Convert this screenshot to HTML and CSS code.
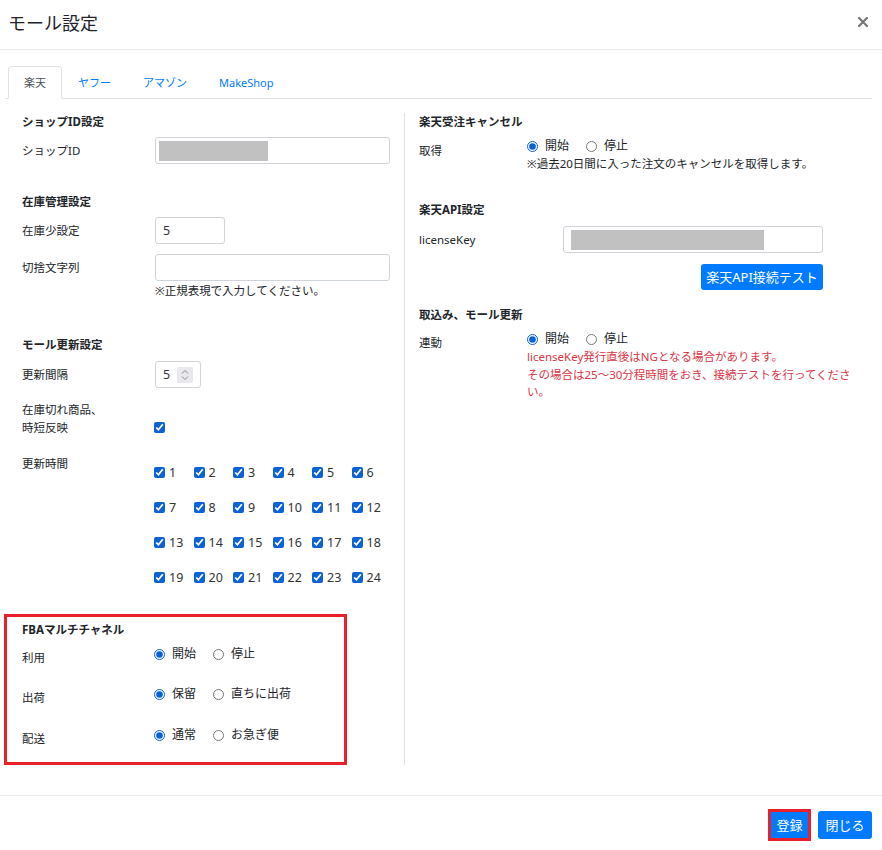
FILE: index.html
```html
<!DOCTYPE html>
<html lang="ja">
<head>
  <meta charset="UTF-8" />
  <title>モール設定</title>
  <link rel="stylesheet" href="styles.css">
</head>
<body>

<div class="modal-header">
  <h1 class="modal-title">モール設定</h1>
  <span class="close">
    <svg width="10" height="10" viewBox="0 0 10 10"><path d="M1 1 L9 9 M9 1 L1 9" stroke="#777" stroke-width="2.2" stroke-linecap="square"/></svg>
  </span>
</div>

<div class="tabs">
  <div class="tab active">楽天</div>
  <div class="tab">ヤフー</div>
  <div class="tab">アマゾン</div>
  <div class="tab">MakeShop</div>
</div>

<div class="pane-row">
  <!-- left column -->
  <div class="col-left">
    <h3 class="heading">ショップID設定</h3>
    <div class="form-row mt6">
      <div class="label">ショップID</div>
      <div class="field field-wide"><span class="mask mask-shop"></span></div>
    </div>

    <h3 class="heading mt29">在庫管理設定</h3>
    <div class="form-row mt6">
      <div class="label">在庫少設定</div>
      <div class="field field-short"><span class="value">5</span></div>
    </div>
    <div class="form-row mt10">
      <div class="label">切捨文字列</div>
      <div class="field field-wide"></div>
    </div>
    <div class="note-left">※正規表現で入力してください。</div>

    <h3 class="heading mt36">モール更新設定</h3>
    <div class="form-row mt7">
      <div class="label">更新間隔</div>
      <div class="field field-num">
        <span class="value">5</span>
        <span class="spinner">
          <svg width="16" height="16" viewBox="0 0 16 16"><path d="M5 6.5 L8 3.5 L11 6.5 M5 9.5 L8 12.5 L11 9.5" fill="none" stroke="#8a8a8a" stroke-width="1"/></svg>
        </span>
      </div>
    </div>
    <div class="form-row top mt13">
      <div class="label">在庫切れ商品、<br>時短反映</div>
      <input type="checkbox" class="check check-stock" checked>
    </div>
    <div class="form-row top mt18">
      <div class="label">更新時間</div>
      <div class="hours">
        <label class="hour"><input type="checkbox" class="check" checked>1</label>
        <label class="hour"><input type="checkbox" class="check" checked>2</label>
        <label class="hour"><input type="checkbox" class="check" checked>3</label>
        <label class="hour"><input type="checkbox" class="check" checked>4</label>
        <label class="hour"><input type="checkbox" class="check" checked>5</label>
        <label class="hour"><input type="checkbox" class="check" checked>6</label>
        <label class="hour"><input type="checkbox" class="check" checked>7</label>
        <label class="hour"><input type="checkbox" class="check" checked>8</label>
        <label class="hour"><input type="checkbox" class="check" checked>9</label>
        <label class="hour"><input type="checkbox" class="check" checked>10</label>
        <label class="hour"><input type="checkbox" class="check" checked>11</label>
        <label class="hour"><input type="checkbox" class="check" checked>12</label>
        <label class="hour"><input type="checkbox" class="check" checked>13</label>
        <label class="hour"><input type="checkbox" class="check" checked>14</label>
        <label class="hour"><input type="checkbox" class="check" checked>15</label>
        <label class="hour"><input type="checkbox" class="check" checked>16</label>
        <label class="hour"><input type="checkbox" class="check" checked>17</label>
        <label class="hour"><input type="checkbox" class="check" checked>18</label>
        <label class="hour"><input type="checkbox" class="check" checked>19</label>
        <label class="hour"><input type="checkbox" class="check" checked>20</label>
        <label class="hour"><input type="checkbox" class="check" checked>21</label>
        <label class="hour"><input type="checkbox" class="check" checked>22</label>
        <label class="hour"><input type="checkbox" class="check" checked>23</label>
        <label class="hour"><input type="checkbox" class="check" checked>24</label>
      </div>
    </div>

    <div class="fba">
      <h3 class="heading">FBAマルチチャネル</h3>
      <div class="fba-row mt6">
        <div class="label fba-label">利用</div>
        <div class="radios">
          <label class="radio-opt"><input type="radio" name="fba-use" class="radio" checked>開始</label>
          <label class="radio-opt"><input type="radio" name="fba-use" class="radio">停止</label>
        </div>
      </div>
      <div class="fba-row mt18">
        <div class="label fba-label">出荷</div>
        <div class="radios">
          <label class="radio-opt"><input type="radio" name="fba-ship" class="radio" checked>保留</label>
          <label class="radio-opt"><input type="radio" name="fba-ship" class="radio">直ちに出荷</label>
        </div>
      </div>
      <div class="fba-row mt19">
        <div class="label fba-label">配送</div>
        <div class="radios">
          <label class="radio-opt"><input type="radio" name="fba-speed" class="radio" checked>通常</label>
          <label class="radio-opt"><input type="radio" name="fba-speed" class="radio">お急ぎ便</label>
        </div>
      </div>
    </div>
  </div>

  <!-- right column -->
  <div class="col-right">
    <h3 class="heading">楽天受注キャンセル</h3>
    <div class="form-row top mt6">
      <div class="label label-r lbl-offset5">取得</div>
      <div>
        <div class="radios">
          <label class="radio-opt"><input type="radio" name="cancel" class="radio" checked>開始</label>
          <label class="radio-opt"><input type="radio" name="cancel" class="radio">停止</label>
        </div>
        <div class="note">※過去20日間に入った注文のキャンセルを取得します。</div>
      </div>
    </div>

    <h3 class="heading mt28">楽天API設定</h3>
    <div class="form-row mt7">
      <div class="label label-key">licenseKey</div>
      <div class="field field-key"><span class="mask mask-key"></span></div>
    </div>
    <div class="api-btn-row">
      <button class="btn btn-api">楽天API接続テスト</button>
    </div>

    <h3 class="heading mt16">取込み、モール更新</h3>
    <div class="form-row top mt6">
      <div class="label label-r lbl-offset4">連動</div>
      <div>
        <div class="radios">
          <label class="radio-opt"><input type="radio" name="link" class="radio" checked>開始</label>
          <label class="radio-opt"><input type="radio" name="link" class="radio">停止</label>
        </div>
        <div class="note-red">licenseKey発行直後はNGとなる場合があります。<br>その場合は25～30分程時間をおき、接続テストを行ってくださ<br>い。</div>
      </div>
    </div>
  </div>
</div>

<div class="modal-footer">
  <button class="btn btn-register">登録</button>
  <button class="btn btn-close">閉じる</button>
</div>

</body>
</html>
```

FILE: styles.css
```css
body {
  margin: 0;
  font-family: 'Noto Sans', 'Noto Sans CJK JP', sans-serif;
  font-size: 11.5px;
  line-height: 18px;
  color: #212529;
  background: #fff;
}
.modal-header {
  display: flex;
  justify-content: space-between;
  align-items: center;
  height: 50px;
  box-sizing: border-box;
  padding: 0 14px 4px 8px;
  border-bottom: 1px solid #e9ecef;
}
.modal-title {
  margin: 0;
  font-size: 18px;
  font-weight: normal;
  line-height: 24px;
}
.close {
  display: flex;
  margin-top: -1px;
}
.tabs {
  display: flex;
  margin: 16px 10px 0 5px;
  padding-left: 3px;
  border-bottom: 1px solid #dee2e6;
}
.tab {
  padding: 8px 15px;
  font-size: 11px;
  line-height: 15px;
  color: #007bff;
  border: 1px solid transparent;
  border-radius: 4px 4px 0 0;
  margin-bottom: -1px;
}
.tab.active {
  color: #495057;
  background: #fff;
  border-color: #dee2e6 #dee2e6 #fff;
}
.pane-row {
  display: flex;
  margin: 14px 0 0 4px;
}
.col-left {
  width: 400px;
  box-sizing: border-box;
  padding: 0 14px 0 18px;
}
.col-right {
  border-left: 1px solid #dee2e6;
  padding-left: 14px;
  width: 440px;
}
.heading {
  margin: 0;
  font-size: 11.5px;
  font-weight: bold;
  line-height: 18px;
}
.form-row {
  display: flex;
  align-items: center;
}
.form-row.top {
  align-items: flex-start;
}
.label {
  width: 133px;
  flex-shrink: 0;
}
.label-r {
  width: 108px;
}
.label-key {
  width: 144px;
}
.lbl-offset5 {
  margin-top: 5px;
}
.lbl-offset4 {
  margin-top: 4px;
}
.mt6 { margin-top: 6px; }
.mt7 { margin-top: 7px; }
.mt10 { margin-top: 10px; }
.mt13 { margin-top: 13px; }
.mt16 { margin-top: 16px; }
.mt18 { margin-top: 18px; }
.mt19 { margin-top: 19px; }
.mt28 { margin-top: 28px; }
.mt29 { margin-top: 29px; }
.mt36 { margin-top: 36px; }

.field {
  display: flex;
  align-items: center;
  box-sizing: border-box;
  height: 27px;
  border: 1px solid #ced4da;
  border-radius: 3px;
  padding: 0 3px;
  background: #fff;
}
.field-wide {
  width: 235px;
}
.field-short {
  width: 70px;
  padding-left: 7px;
}
.field-num {
  width: 46px;
  padding-left: 7px;
}
.field-key {
  width: 260px;
  height: 27px;
  padding-left: 7px;
}
.value {
  font-size: 12.5px;
  color: #333;
}
.spinner {
  display: flex;
  margin-left: 7px;
  background: #e9e9ed;
  border-radius: 2px;
}
.mask {
  display: block;
  height: 20px;
  background: #c1c1c1;
}
.mask-shop {
  width: 109px;
}
.mask-key {
  width: 193px;
}
.note-left {
  margin: 1px 0 0 133px;
}
.check {
  width: 11px;
  height: 11px;
  margin: 0;
  accent-color: #0b62d6;
}
.check-stock {
  margin-top: 21px;
  margin-left: -1px;
}
.hours {
  display: grid;
  grid-template-columns: repeat(6, 39.5px);
  grid-auto-rows: 35px;
  align-items: center;
  margin-left: -1px;
}
.hour {
  display: flex;
  align-items: center;
  gap: 4px;
  font-size: 12.5px;
  color: #333;
}
.fba {
  margin: 19px 0 0 -18px;
  width: 343px;
  box-sizing: border-box;
  border: 3px solid #e8202a;
  padding: 4px 0 14px 15px;
}
.fba-row {
  display: flex;
  align-items: flex-start;
}
.fba-label {
  width: 132px;
  margin-top: 4px;
}
.radios {
  display: flex;
  align-items: center;
  font-size: 12px;
  line-height: 18px;
}
.radio-opt {
  display: flex;
  align-items: center;
  gap: 7px;
  margin-right: 17px;
}
.radio {
  width: 11px;
  height: 11px;
  margin: 0;
  accent-color: #0b62d6;
}
.note {
  line-height: 18px;
}
.note-red {
  color: #dc3545;
  line-height: 17.5px;
}
.api-btn-row {
  width: 404px;
  display: flex;
  justify-content: flex-end;
  margin-top: 11px;
}
.btn {
  background: #007bff;
  color: #fff;
  border: none;
  border-radius: 3px;
  font-family: inherit;
  font-size: 13px;
  line-height: 18px;
  padding: 0;
  cursor: pointer;
}
.btn-api {
  width: 122px;
  height: 26px;
}
.modal-footer {
  display: flex;
  justify-content: flex-end;
  align-items: center;
  gap: 7px;
  margin-top: 30px;
  padding: 13px 10px 0;
  border-top: 1px solid #e9ecef;
}
.btn-register {
  width: 43px;
  height: 32px;
  box-sizing: border-box;
  border: 3px solid #e8202a;
  border-radius: 0;
}
.btn-close {
  width: 54px;
  height: 28px;
}
```
